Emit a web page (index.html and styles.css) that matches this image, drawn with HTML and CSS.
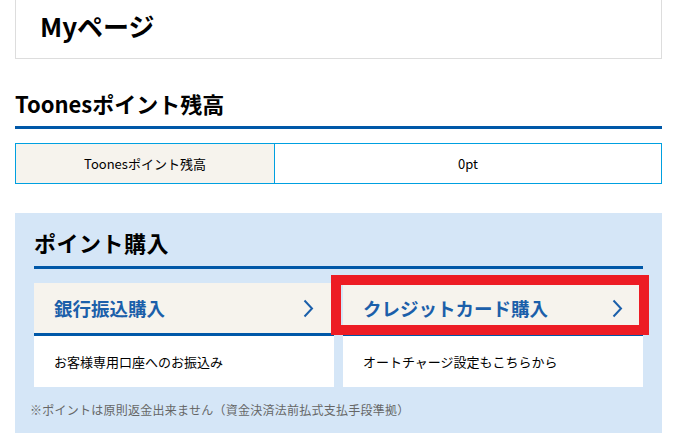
FILE: index.html
```html
<!DOCTYPE html>
<html lang="ja">
<head>
    <meta charset="UTF-8">
    <meta name="viewport" content="width=device-width, initial-scale=1.0">
    <title>Myページ</title>
    <link rel="stylesheet" href="styles.css">
</head>
<body>
    <div class="container">
        <div class="page-head">
            <h1 class="page-title">Myページ</h1>
        </div>

        <h2 class="section-title">Toonesポイント残高</h2>
        <table class="balance">
            <tr>
                <th>Toonesポイント残高</th>
                <td>0pt</td>
            </tr>
        </table>

        <div class="purchase">
            <h3 class="purchase-title">ポイント購入</h3>
            <div class="cards">
                <a class="card" href="#">
                    <div class="card-head">
                        <span>銀行振込購入</span>
                        <svg class="chevron" width="11" height="19" viewBox="0 0 11 19"><path d="M1.5 1.5 L9 9.5 L1.5 17.5" fill="none" stroke="#1b5faa" stroke-width="2"/></svg>
                    </div>
                    <div class="card-body">お客様専用口座へのお振込み</div>
                </a>
                <a class="card active" href="#">
                    <div class="card-head">
                        <span>クレジットカード購入</span>
                        <svg class="chevron" width="11" height="19" viewBox="0 0 11 19"><path d="M1.5 1.5 L9 9.5 L1.5 17.5" fill="none" stroke="#1b5faa" stroke-width="2"/></svg>
                    </div>
                    <div class="card-body">オートチャージ設定もこちらから</div>
                </a>
            </div>
            <p class="note">※ポイントは原則返金出来ません（資金決済法前払式支払手段準拠）</p>
        </div>
    </div>
</body>
</html>
```

FILE: styles.css
```css
body {
    margin: 0;
    font-family: "Noto Sans CJK JP", "Noto Sans", sans-serif;
    color: #000;
    background: white;
}
.container {
    padding: 0 12px 0 15px;
}
.page-head {
    height: 58px;
    border: 1px solid #ddd;
    border-top: none;
    padding-left: 24px;
}
.page-title {
    margin: 0;
    font-size: 26px;
    font-weight: bold;
    line-height: 52px;
}
.section-title {
    margin: 28px 0 0;
    font-size: 22px;
    font-weight: bold;
    line-height: 33px;
    padding-bottom: 6px;
    border-bottom: 3px solid #0058a8;
}
.balance {
    width: 100%;
    margin-top: 14px;
    border-collapse: collapse;
    font-size: 13px;
}
.balance th, .balance td {
    border: 1px solid #00a0e0;
    height: 39px;
    padding: 0;
    text-align: center;
    font-weight: normal;
}
.balance th {
    width: 258px;
    background: #f6f3ed;
}
.purchase {
    margin-top: 29px;
    background: #d5e6f7;
    padding: 13px 19px 14px;
}
.purchase-title {
    margin: 0;
    font-size: 22px;
    font-weight: bold;
    line-height: 33px;
    letter-spacing: 0.5px;
    padding-bottom: 7px;
    border-bottom: 3px solid #0058a8;
}
.cards {
    display: grid;
    grid-template-columns: 1fr 1fr;
    gap: 9px;
    margin-top: 14px;
}
.card {
    position: relative;
    display: block;
    text-decoration: none;
    color: #000;
}
.card-head {
    display: flex;
    align-items: center;
    justify-content: space-between;
    height: 50px;
    padding: 0 20px;
    background: #f6f3ed;
    border-bottom: 3px solid #0058a8;
    color: #1b5faa;
    font-size: 18.5px;
    font-weight: bold;
}
.card-body {
    height: 51px;
    line-height: 51px;
    padding-left: 20px;
    background: white;
    font-size: 13px;
}
.card.active::after {
    content: "";
    position: absolute;
    left: -12px;
    top: -8px;
    width: 298px;
    height: 40px;
    border: 10px solid #ed1c24;
}
.note {
    margin: 14px 0 0 -4px;
    font-size: 12px;
    line-height: 18px;
    letter-spacing: 0.25px;
    color: #666;
}
```
